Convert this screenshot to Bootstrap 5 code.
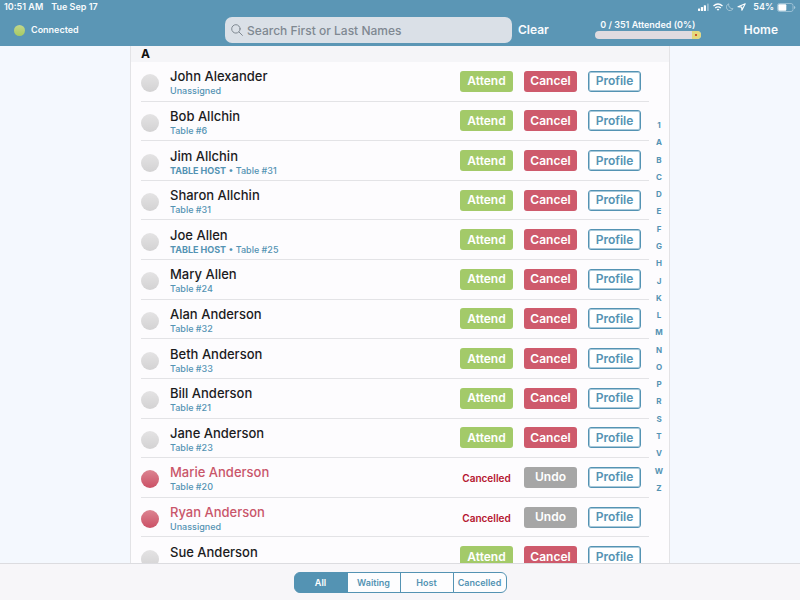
<!DOCTYPE html>
<html lang="en">
<head>
<meta charset="utf-8">
<meta name="viewport" content="width=device-width, initial-scale=1">
<title>Guest check-in</title>
<link href="https://cdn.jsdelivr.net/npm/bootstrap@5.3.0/dist/css/bootstrap.min.css" rel="stylesheet">
<style>
:root { --brand: #5b96b5; --link: #5493b3; --rule: #e3e3e6; }
body { font-family: Inter, "Liberation Sans", sans-serif; background: #f4f8fe; font-size: 9px; line-height: 12px; }
.topbar { background: var(--brand); color: #f8fbfd; }
.status-line { height: 14px; padding: 0 4px; font-weight: 600; }
.status-icons { gap: 3px; }
.tool-line { height: 32px; padding-right: 16px; }
.connection { flex: 0 0 225px; padding-left: 14px; gap: 6px; font-weight: 600; }
.online-dot { width: 11px; height: 11px; border-radius: 50%; background: linear-gradient(#c3d78c, #a6ca62); }
.search-box { height: 26px; border-radius: 7px; background: #dae0e7; color: #7f8891; padding: 0 6px; gap: 4px; }
.search-box input { font-size: 12px; font-weight: 500; color: inherit; outline: 0; min-width: 0; }
.search-box input::placeholder { color: #7f8891; opacity: 1; }
.bar-btn { font-size: 12px; line-height: 16px; font-weight: 600; color: #f8fbfd; padding: 0 6px; }
.bar-btn:hover { color: #fff; }
.attendance { width: 106px; margin-left: 40px; margin-right: 37px; padding-bottom: 2px; }
.attendance .progress { height: 8px; border-radius: 4px; background: #dfdbe0; }
.attendance .progress-bar { background: #e3d97c; width: 9px; }
.attendance .marker { width: 2px; height: 2px; background: #d0562c; }
.roster { flex: 0 1 540px; background: #fdfcfe; border: solid var(--rule); border-width: 0 1px; }
.section-title { background: #f5f5f8; color: #111; font-size: 12px; line-height: 16px; font-weight: 700; padding-left: 10px; }
.guest-scroll { overflow-y: auto; scrollbar-width: none; padding-left: 10px; }
.guest-scroll::-webkit-scrollbar { display: none; }
.guest-list { display: grid; grid-auto-rows: 1fr; min-height: 515px; }
.guest { border-bottom: 1px solid var(--rule); padding-right: 8px; gap: 11px; }
.guest-dot { width: 18px; height: 18px; border-radius: 50%; background: linear-gradient(#e4e3e4, #d3d2d3); margin-top: 4px; }
.guest-text { padding-top: 2px; }
.guest-name { font-size: 13px; line-height: 18px; font-weight: 500; color: #1b1b1d; }
.guest-note { color: var(--link); font-weight: 500; line-height: 12px; }
.is-cancelled .guest-dot { background: linear-gradient(#dc8491, #cb5166); }
.is-cancelled .guest-name { color: #c9566a; }
.act { width: 53px; height: 21px; padding: 0; border-radius: 3px; font-size: 12px; line-height: 16px; font-weight: 600; border: 0; color: #fff; }
.act:hover { color: #fff; }
.act-attend, .act-attend:hover { background: #a3ca69; }
.act-cancel, .act-cancel:hover { background: #ce5a6c; }
.act-undo, .act-undo:hover { background: #a6a6a6; }
.act-profile, .act-profile:hover { border: 1px solid var(--link); box-shadow: inset 0 0 0 1px #a9c9da; color: var(--link); background: #fff; }
.state-text { width: 53px; padding-top: 2px; font-size: 10px; font-weight: 600; color: #b5152f; }
.jump { display: grid; grid-auto-rows: 1fr; flex: 0 0 20px; height: 380px; margin-bottom: 12px; font-size: 8px; font-weight: 700; }
.jump a { color: var(--link); }
.bottombar { background: #f7f6f9; border-top: 1px solid #dcdce0; padding: 8px 0 7px; }
.segments .btn { width: 54px; height: 21px; padding: 0; font-size: 9px; line-height: 19px; font-weight: 600; border-color: var(--link); color: var(--link); background: #fdfdfe; border-radius: 6px; }
.segments .btn-check:checked + .btn { background: var(--link); border-color: var(--link); color: #fff; }
</style>
<script src="https://cdn.jsdelivr.net/npm/bootstrap@5.3.0/dist/js/bootstrap.bundle.min.js"></script>
</head>
<body class="vh-100 d-flex flex-column overflow-hidden">
<header class="topbar">
  <div class="status-line d-flex align-items-center">
    <span>10:51 AM</span><span class="ms-2">Tue Sep 17</span>
    <div class="status-icons ms-auto d-flex align-items-center">
      <svg width="12" height="9" viewBox="0 0 12 9" fill="#fff" aria-hidden="true"><rect x="0" y="5.5" width="2.2" height="2.5" rx=".4"/><rect x="2.900" y="4" width="2.200" height="4" rx=".4"/><rect x="5.800" y="2.300" width="2.200" height="5.700" rx=".4"/><rect x="9" y="0.500" width="1.800" height="7.500" rx=".4" opacity=".35"/></svg>
      <svg width="10" height="8" viewBox="0 0 10 8" fill="none" stroke="#fff" stroke-width="1.400" aria-hidden="true"><path d="M.5 3Q5-1 9.500 3M2.200 5Q5 2.700 7.800 5"/><path d="M3.600 6.300Q5 5.200 6.400 6.300L5 7.800Z" fill="#fff" stroke="none"/></svg>
      <svg width="8" height="8" viewBox="0 0 8 8" fill="none" stroke="#a9c8d8" stroke-width=".9" stroke-linejoin="round" aria-hidden="true"><path d="M2.700.8A3.500 3.500 0 1 0 7 5.700A4 4 0 0 1 2.700.8Z"/></svg>
      <svg width="9" height="8" viewBox="0 0 9 8" fill="none" stroke="#fff" stroke-width="1.100" stroke-linejoin="round" aria-hidden="true"><path d="M8.200.7L1 3.700L4.700 4.100L4.900 7.300Z"/></svg>
      <span class="ms-1">54%</span>
      <svg width="19" height="9" viewBox="0 0 19 9" aria-hidden="true"><rect x=".5" y=".5" width="15.500" height="8" rx="2" fill="none" stroke="#a7c8da" stroke-width=".8"/><rect x="1.300" y="1.300" width="8" height="6.400" rx="1" fill="#fff"/><path d="M17 3v3q1.300-.4 1.300-1.500T17 3Z" fill="#a7c8da"/></svg>
    </div>
  </div>
  <div class="tool-line d-flex align-items-center">
    <div class="connection d-flex align-items-center"><span class="online-dot"></span><span>Connected</span></div>
    <label class="search-box d-flex align-items-center flex-fill">
      <svg class="flex-shrink-0" width="12" height="12" viewBox="0 0 12 12" fill="none" stroke="#7f8891" stroke-width="1" stroke-linecap="round" aria-hidden="true"><circle cx="4.900" cy="4.900" r="4.200"/><path d="M8 8l3.400 3.400"/></svg>
      <input type="text" class="border-0 bg-transparent p-0 w-100" placeholder="Search First or Last Names" aria-label="Search First or Last Names">
    </label>
    <button type="button" class="btn border-0 bar-btn">Clear</button>
    <div class="attendance d-flex flex-column text-nowrap">
      <div class="text-center fw-semibold">0 / 351 Attended (0%)</div>
      <div class="progress justify-content-end" role="progressbar" aria-label="Attended" aria-valuenow="0" aria-valuemin="0" aria-valuemax="351"><div class="progress-bar align-items-center"><span class="marker"></span></div></div>
    </div>
    <button type="button" class="btn border-0 bar-btn">Home</button>
  </div>
</header>
<main class="d-flex justify-content-center flex-fill overflow-hidden">
  <section class="roster d-flex flex-column">
    <h2 class="section-title m-0">A</h2>
    <div class="d-flex flex-fill align-items-center overflow-hidden">
      <div class="guest-scroll flex-fill h-100"><ul class="guest-list list-unstyled m-0" id="guests"></ul></div>
      <nav class="jump text-center" id="jump" aria-label="Jump to letter"></nav>
    </div>
  </section>
</main>
<footer class="bottombar d-flex justify-content-center">
  <div class="btn-group segments" role="group" aria-label="Filter guests">
    <input type="radio" class="btn-check" name="filter" id="f-all" checked><label class="btn" for="f-all">All</label>
    <input type="radio" class="btn-check" name="filter" id="f-waiting"><label class="btn" for="f-waiting">Waiting</label>
    <input type="radio" class="btn-check" name="filter" id="f-host"><label class="btn" for="f-host">Host</label>
    <input type="radio" class="btn-check" name="filter" id="f-cancelled"><label class="btn" for="f-cancelled">Cancelled</label>
  </div>
</footer>
<script>
const guests = [
  ["John Alexander", "Unassigned"], ["Bob Allchin", "Table #6"], ["Jim Allchin", "Table #31", "host"],
  ["Sharon Allchin", "Table #31"], ["Joe Allen", "Table #25", "host"], ["Mary Allen", "Table #24"],
  ["Alan Anderson", "Table #32"], ["Beth Anderson", "Table #33"], ["Bill Anderson", "Table #21"],
  ["Jane Anderson", "Table #23"], ["Marie Anderson", "Table #20", "cancelled"],
  ["Ryan Anderson", "Unassigned", "cancelled"], ["Sue Anderson", "Table #25"]
];
document.getElementById("guests").innerHTML = guests.map(([name, seat, flag]) => {
  const off = flag === "cancelled";
  const actions = off
    ? '<span class="state-text text-center">Cancelled</span><button type="button" class="btn act act-undo">Undo</button>'
    : '<button type="button" class="btn act act-attend">Attend</button><button type="button" class="btn act act-cancel">Cancel</button>';
  return `<li class="guest d-flex align-items-center ${off ? "is-cancelled" : ""}">
    <span class="guest-dot flex-shrink-0"></span>
    <div class="guest-text flex-fill"><div class="guest-name">${name}</div>
    <div class="guest-note">${flag === "host" ? '<span class="fw-bold">TABLE HOST</span> • ' : ""}${seat}</div></div>
    ${actions}<button type="button" class="btn act act-profile">Profile</button></li>`;
}).join("");
document.getElementById("jump").innerHTML = [..."1ABCDEFGHJKLMNOPRSTVWZ"].map(c =>
  `<a class="text-decoration-none d-flex align-items-center justify-content-center" href="#guests">${c}</a>`).join("");
</script>
</body>
</html>
